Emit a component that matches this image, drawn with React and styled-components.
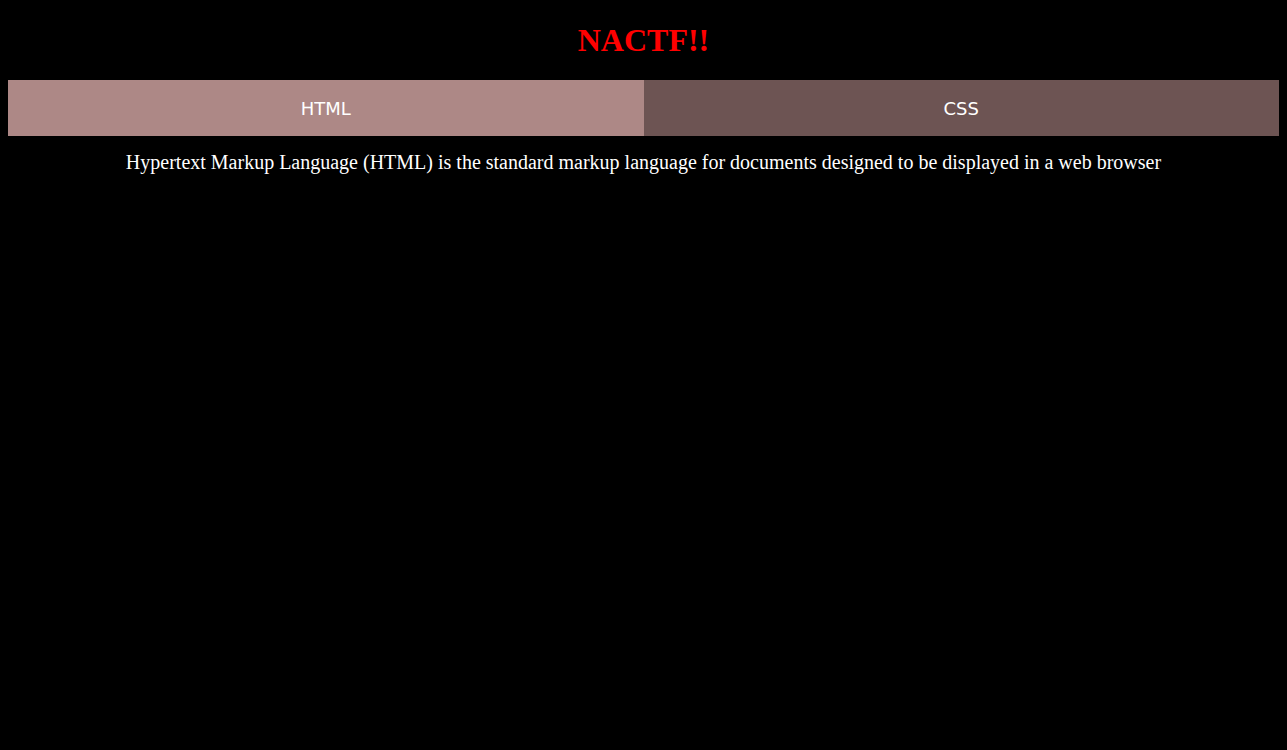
import React, { useState } from "react";
import styled, { createGlobalStyle } from "styled-components";

const GlobalStyle = createGlobalStyle`
  body {
    margin: 8px;
    background-color: #000000;
    font-family: "Liberation Serif", "Times New Roman", serif;
  }
`;

const Title = styled.h1`
  color: #ff0000;
  text-align: center;
  font-size: 32px;
  font-weight: bold;
  margin: 13.5px 0 21.44px;
`;

const TabBar = styled.div`
  display: flex;
  height: 56px;
`;

const Tab = styled.button`
  flex: 1;
  border: none;
  padding: 2px 0 0;
  margin: 0;
  cursor: pointer;
  color: #ffffff;
  font-family: "DejaVu Sans", Verdana, sans-serif;
  font-size: 18px;
  background-color: ${(p) => (p.$active ? "#ad8886" : "#6d5453")};
`;

const Content = styled.p`
  color: #ffffff;
  text-align: center;
  font-size: 20px;
  margin: 15px 0;
`;

const tabs = {
  HTML: "Hypertext Markup Language (HTML) is the standard markup language for documents designed to be displayed in a web browser",
  CSS: "Cascading Style Sheets (CSS) is a style sheet language used for describing the presentation of a document written in a markup language",
};

export default function App() {
  const [current, setCurrent] = useState("HTML");
  return (
    <>
      <GlobalStyle />
      <Title>NACTF!!</Title>
      <TabBar>
        {Object.keys(tabs).map((name) => (
          <Tab key={name} $active={current === name} onClick={() => setCurrent(name)}>
            {name}
          </Tab>
        ))}
      </TabBar>
      <Content>{tabs[current]}</Content>
    </>
  );
}
